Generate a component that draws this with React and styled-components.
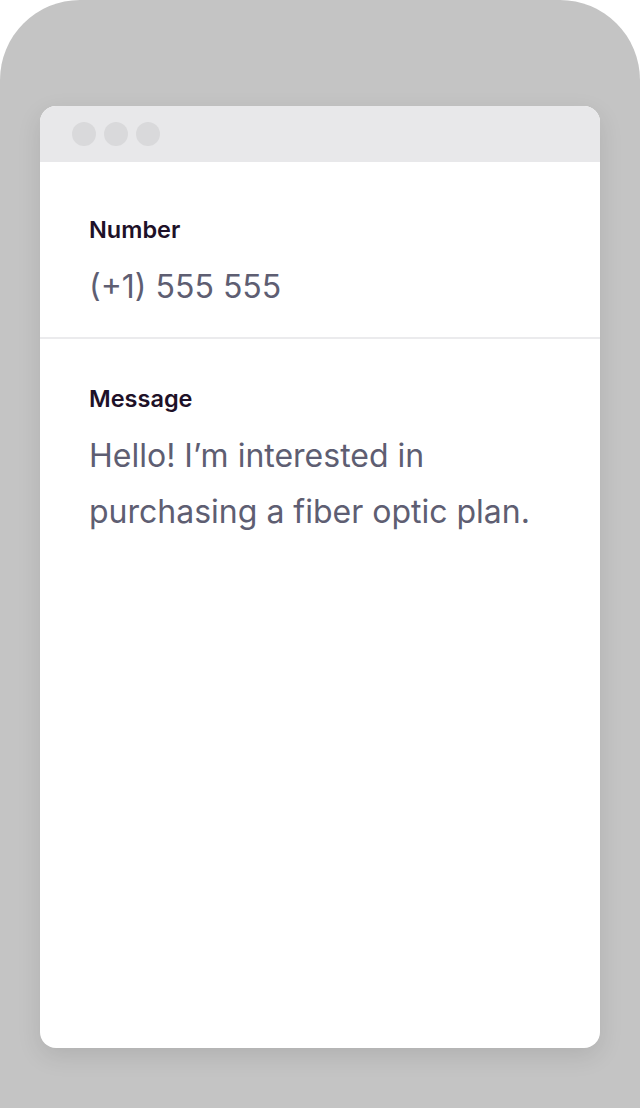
import React from 'react';
import styled, { createGlobalStyle } from 'styled-components';

const GlobalStyle = createGlobalStyle`
  html, body {
    margin: 0;
    padding: 0;
    background: #ffffff;
  }
  * {
    box-sizing: border-box;
  }
`;

const fields = [
  { label: 'Number', value: '(+1) 555 555' },
  { label: 'Message', value: 'Hello! I\u2019m interested in purchasing a fiber optic plan.' },
];

const App = () => {
  return (
    <>
      <GlobalStyle />
      <Frame>
        <Window>
          <TitleBar>
            <Dot />
            <Dot />
            <Dot />
          </TitleBar>
          {fields.map((f, i) => (
            <Field key={f.label} first={i === 0} divided={i < fields.length - 1}>
              <Label>{f.label}</Label>
              <Value>{f.value}</Value>
            </Field>
          ))}
        </Window>
      </Frame>
    </>
  );
};

const Frame = styled.div`
  display: flex;
  flex-direction: column;
  width: 640px;
  height: 1108px;
  padding: 106px 40px 60px;
  background-color: #c4c4c4;
  border-radius: 80px 80px 0 0;
`;

const Window = styled.div`
  flex: 1;
  display: flex;
  flex-direction: column;
  background-color: #ffffff;
  border-radius: 16px;
  overflow: hidden;
  box-shadow: 0 8px 24px rgba(0, 0, 0, 0.1);
`;

const TitleBar = styled.div`
  display: flex;
  align-items: center;
  gap: 8px;
  height: 56px;
  padding-left: 32px;
  background-color: #e8e8ea;
`;

const Dot = styled.span`
  width: 24px;
  height: 24px;
  border-radius: 50%;
  background-color: #d9d9db;
`;

const Field = styled.div`
  display: flex;
  flex-direction: column;
  gap: 15px;
  padding: ${({ first }) => (first ? '54px 49px 22px' : '46px 49px 0')};
  border-bottom: ${({ divided }) => (divided ? '2px solid #ebebed' : 'none')};
`;

const Label = styled.div`
  font-family: Inter, "Noto Sans", sans-serif;
  font-size: 23.5px;
  line-height: 28px;
  font-weight: 600;
  color: #1e1128;
`;

const Value = styled.div`
  font-family: Inter, "Noto Sans", sans-serif;
  font-size: 32px;
  line-height: 56px;
  font-weight: 400;
  color: #5e5e72;
  max-width: 462px;
`;

export default App;
